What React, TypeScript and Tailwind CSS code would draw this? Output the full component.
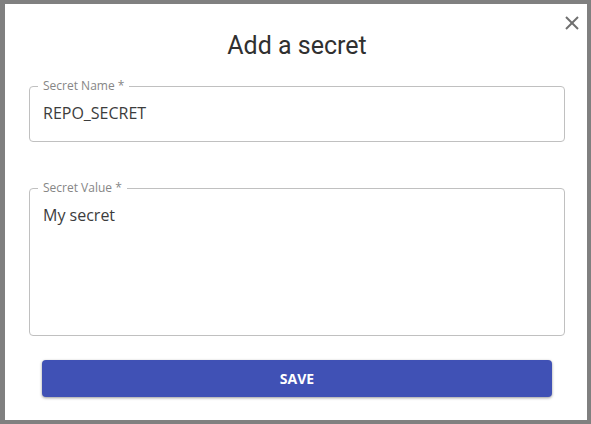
import { X } from "lucide-react";
import type { ReactNode } from "react";

function Field({ id, label, children }: { id: string; label: string; children: ReactNode }) {
  return (
    <fieldset className="min-w-0 rounded border border-[#c0c0c0] pt-[7px]">
      <legend className="ml-2 px-[5px] text-xs leading-4 text-[#868686]">
        <label htmlFor={id} className="block">
          {label} *
        </label>
      </legend>
      {children}
    </fieldset>
  );
}

export default function App() {
  return (
    <div className="min-h-screen bg-[#808080] py-1 pr-1 pl-[5px] font-['Open_Sans',sans-serif] text-[#3c3c3c]">
      <main role="dialog" aria-labelledby="dialog-title" className="relative bg-white pt-6 pr-[22px] pb-[23px] pl-6">
        <button type="button" aria-label="Close" className="absolute top-[7px] right-[3px] text-[#707070]">
          <X size={24} strokeWidth={2} strokeLinecap="butt" />
        </button>
        <h1 id="dialog-title" className="text-center font-[Roboto,sans-serif] text-[25px] leading-9 text-[#303030]">
          Add a secret
        </h1>
        <form className="mt-[14px]" onSubmit={(event) => event.preventDefault()}>
          <Field id="secret-name" label="Secret Name">
            <input
              id="secret-name"
              type="text"
              required
              defaultValue="REPO_SECRET"
              className="block h-10 w-full bg-transparent px-[13px] pb-4 text-base outline-none"
            />
          </Field>
          <div className="mt-[38px]">
            <Field id="secret-value" label="Secret Value">
              <textarea
                id="secret-value"
                required
                defaultValue="My secret"
                className="block h-[132px] w-full resize-none bg-transparent px-[13px] text-base outline-none"
              />
            </Field>
          </div>
          <div className="mt-6 px-[13px]">
            <button
              type="submit"
              className="block w-full rounded bg-[#4051b5] text-sm leading-[37px] font-bold text-white uppercase shadow-[0_1px_3px_rgba(0,0,0,0.4)]"
            >
              Save
            </button>
          </div>
        </form>
      </main>
    </div>
  );
}
